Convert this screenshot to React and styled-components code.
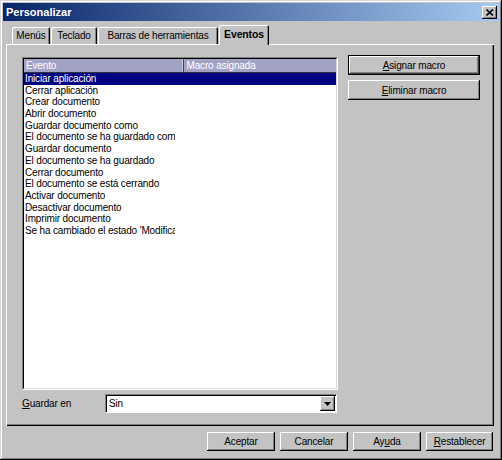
import React from 'react'
import styled, { createGlobalStyle } from 'styled-components'

const GlobalStyle = createGlobalStyle`
    html, body {
        margin: 0;
        padding: 0;
        background: #fff;
    }
    body {
        font-family: "Liberation Sans", Arial, sans-serif;
        font-size: 10px;
        letter-spacing: -0.15px;
        color: #000;
    }
`

const gray = '#c3c3c3'

const Window = styled.div`
    width: 502px;
    height: 460px;
    box-sizing: border-box;
    padding: 3px;
    background: ${gray};
    display: flex;
    flex-direction: column;
    box-shadow: inset -1px -1px #000, inset 1px 1px #d8d8d8,
        inset -2px -2px #808080, inset 2px 2px #fff;
`

const TitleBar = styled.div`
    height: 18px;
    flex: none;
    display: flex;
    align-items: center;
    justify-content: space-between;
    padding: 0 2px 0 3px;
    background: linear-gradient(to right, #0a246a, #a6caf0);
`

const Title = styled.span`
    color: #fff;
    font-weight: bold;
    font-size: 11px;
    letter-spacing: 0;
`

const CloseButton = styled.div`
    width: 15px;
    height: 13px;
    background: ${gray};
    display: flex;
    align-items: center;
    justify-content: center;
    box-shadow: inset -1px -1px #000, inset 1px 1px #fff,
        inset -2px -2px #808080;
`

const Content = styled.div`
    flex: 1;
    display: flex;
    flex-direction: column;
    padding: 4px 5px 0 3px;
`

const TabStrip = styled.div`
    height: 19px;
    display: flex;
    align-items: flex-end;
    padding-left: 6px;
    position: relative;
    z-index: 1;
`

const Tab = styled.div`
    width: ${p => p.w}px;
    height: ${p => (p.active ? 20 : 17)}px;
    margin-bottom: ${p => (p.active ? -1 : 0)}px;
    margin-right: ${p => (p.active ? 0 : 1)}px;
    box-sizing: border-box;
    display: flex;
    align-items: center;
    justify-content: center;
    padding-bottom: ${p => (p.active ? 2 : 0)}px;
    background: ${gray};
    font-weight: ${p => (p.active ? 'bold' : 'normal')};
    font-size: ${p => (p.active ? 10.5 : 10)}px;
    border-radius: 2px 2px 0 0;
    box-shadow: inset 1px 1px #fff, inset -1px 0 #000, inset -2px 0 #808080;
`

const Panel = styled.div`
    height: 382px;
    box-sizing: border-box;
    padding: 11px 0 0 16px;
    box-shadow: inset 1px 1px #fff, inset -1px -1px #000,
        inset -2px -2px #808080;
`

const Upper = styled.div`
    display: grid;
    grid-template-columns: 316px 132px;
    column-gap: 10px;
    align-items: start;
`

const ListOuter = styled.div`
    margin-top: 2px;
    height: 333px;
    box-sizing: border-box;
    border: 1px solid;
    border-color: #808080 #fff #fff #808080;
`

const ListInner = styled.div`
    height: 100%;
    box-sizing: border-box;
    border: 1px solid;
    border-color: #000 #d8d8d8 #d8d8d8 #000;
    background: #fff;
    overflow: hidden;
`

const Header = styled.div`
    display: flex;
    height: 13px;
    background: #a2a2c4;
    border-bottom: 1px solid #303040;
    color: #fff;
`

const HeaderCell = styled.div`
    width: ${p => p.w}px;
    padding-left: 2px;
    line-height: 13px;
    border-right: ${p => (p.last ? 'none' : '1px solid #404050')};
    box-shadow: ${p => (p.last ? 'none' : 'inset -1px 0 #c8c8e0')};
`

const Row = styled.div`
    height: 11.7px;
    line-height: 11.7px;
    padding-left: 1px;
    background: ${p => (p.selected ? '#000080' : 'transparent')};
    color: ${p => (p.selected ? '#fff' : '#000')};
`

const Cell = styled.div`
    width: 150px;
    white-space: nowrap;
    overflow: hidden;
`

const SideButtons = styled.div`
    display: flex;
    flex-direction: column;
    gap: 5px;
`

const Button = styled.div`
    height: ${p => p.h || 20}px;
    width: ${p => (p.w ? p.w + 'px' : 'auto')};
    box-sizing: border-box;
    display: flex;
    align-items: center;
    justify-content: center;
    background: ${gray};
    box-shadow: ${p =>
        p.primary
            ? 'inset 0 0 0 1px #000, inset -2px -2px #404040, inset 2px 2px #fff, inset -3px -3px #808080'
            : 'inset -1px -1px #000, inset 1px 1px #fff, inset -2px -2px #808080'};
`

const Key = styled.span`
    text-decoration: underline;
`

const ComboRow = styled.div`
    display: flex;
    align-items: center;
    margin-top: 4px;
    height: 19px;
`

const Label = styled.div`
    width: 83px;
`

const Combo = styled.div`
    width: 232px;
    height: 19px;
    box-sizing: border-box;
    display: flex;
    align-items: center;
    background: #fff;
    border: 1px solid;
    border-color: #808080 #fff #fff #808080;
    box-shadow: inset 1px 1px #000;
    padding: 1px 1px 1px 3px;
`

const ComboText = styled.div`
    flex: 1;
`

const DropButton = styled.div`
    width: 15px;
    height: 15px;
    display: flex;
    align-items: center;
    justify-content: center;
    background: ${gray};
    box-shadow: inset -1px -1px #000, inset 1px 1px #fff,
        inset -2px -2px #808080;
`

const Footer = styled.div`
    display: flex;
    justify-content: flex-end;
    gap: 5px;
    margin-top: 6px;
    padding-right: 1px;
`

const events = [
    'Iniciar aplicación',
    'Cerrar aplicación',
    'Crear documento',
    'Abrir documento',
    'Guardar documento como',
    'El documento se ha guardado como',
    'Guardar documento',
    'El documento se ha guardado',
    'Cerrar documento',
    'El documento se está cerrando',
    'Activar documento',
    'Desactivar documento',
    'Imprimir documento',
    "Se ha cambiado el estado 'Modificado'",
]

const tabs = [
    { label: 'Menús', w: 38 },
    { label: 'Teclado', w: 46 },
    { label: 'Barras de herramientas', w: 120 },
    { label: 'Eventos', w: 50, active: true },
]

export default function App() {
    return (
        <>
            <GlobalStyle />
            <Window>
                <TitleBar>
                    <Title>Personalizar</Title>
                    <CloseButton>
                        <svg width="8" height="7" viewBox="0 0 8 7">
                            <path d="M0.5 0.5 L7 6.5 M7 0.5 L0.5 6.5" stroke="#000" strokeWidth="1.6" />
                        </svg>
                    </CloseButton>
                </TitleBar>
                <Content>
                    <TabStrip>
                        {tabs.map(t => (
                            <Tab key={t.label} w={t.w} active={t.active}>{t.label}</Tab>
                        ))}
                    </TabStrip>
                    <Panel>
                        <Upper>
                            <ListOuter>
                                <ListInner>
                                    <Header>
                                        <HeaderCell w={158}>Evento</HeaderCell>
                                        <HeaderCell w={150} last>Macro asignada</HeaderCell>
                                    </Header>
                                    {events.map((e, i) => (
                                        <Row key={e} selected={i === 0}>
                                            <Cell>{e}</Cell>
                                        </Row>
                                    ))}
                                </ListInner>
                            </ListOuter>
                            <SideButtons>
                                <Button primary><span><Key>A</Key>signar macro</span></Button>
                                <Button><span><Key>E</Key>liminar macro</span></Button>
                            </SideButtons>
                        </Upper>
                        <ComboRow>
                            <Label><Key>G</Key>uardar en</Label>
                            <Combo>
                                <ComboText>Sin</ComboText>
                                <DropButton>
                                    <svg width="7" height="4" viewBox="0 0 7 4">
                                        <path d="M0 0 H7 L3.5 4 Z" fill="#000" />
                                    </svg>
                                </DropButton>
                            </Combo>
                        </ComboRow>
                    </Panel>
                    <Footer>
                        <Button w={68} h={19}>Aceptar</Button>
                        <Button w={68} h={19}>Cancelar</Button>
                        <Button w={68} h={19}><span>Ay<Key>u</Key>da</span></Button>
                        <Button w={67} h={19}><span><Key>R</Key>establecer</span></Button>
                    </Footer>
                </Content>
            </Window>
        </>
    )
}
